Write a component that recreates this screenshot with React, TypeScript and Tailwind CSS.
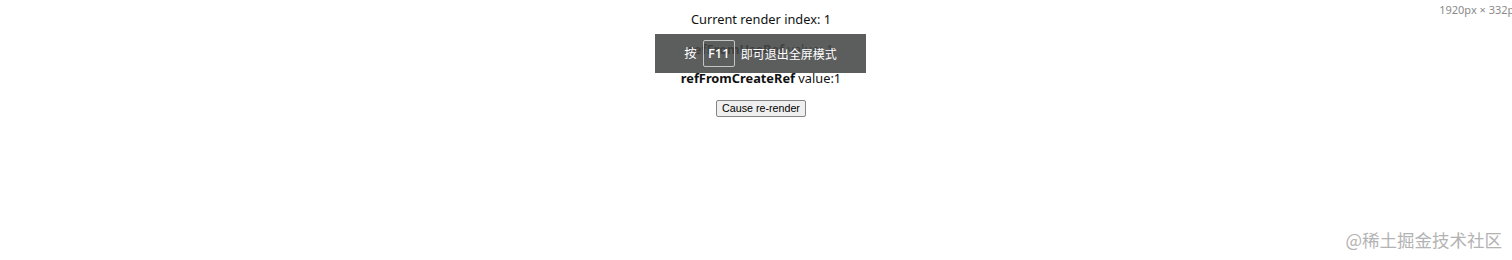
import React from "react";

export default function App() {
  return (
    <div className="relative w-[1512px] h-[260px] bg-white overflow-hidden" style={{ fontFamily: '"Noto Sans", "Open Sans", sans-serif' }}>
      <div className="flex flex-col items-center pl-[10px] pt-[5px] text-[12.8px] text-[#111]">
        <div className="h-[29.5px] leading-[29.5px]">Current render index: 1</div>
        <div className="h-[29.5px] leading-[29.5px]">
          <span className="font-bold">refFromUseRef</span> value: 1
        </div>
        <div className="h-[29.5px] leading-[29.5px]">
          <span className="font-bold">refFromCreateRef</span> value:1
        </div>
        <button className="mt-[6px] h-[17px] px-[5px] bg-[#efefef] border border-[#858585] rounded-[2px] text-[10.7px] leading-[15px] text-black" style={{ fontFamily: '"Liberation Sans", Arial, sans-serif' }}>
          Cause re-render
        </button>
      </div>

      <div className="absolute left-[655px] top-[34px] w-[211px] h-[39px] bg-[rgba(70,71,71,0.88)] flex items-center justify-center gap-[6px] text-white text-[12px]" style={{ fontFamily: '"Noto Sans CJK SC", "Noto Sans", sans-serif' }}>
        <span className="text-[12.5px]">按</span>
        <span className="h-[27px] px-[4px] flex items-center border border-[#c4c4c4] rounded-[2px] text-[13px] font-medium" style={{ fontFamily: '"Noto Sans", sans-serif' }}>F11</span>
        <span>即可退出全屏模式</span>
      </div>

      <div className="absolute right-0 top-[2px] text-[11px] text-[#8a8a8a] whitespace-nowrap translate-x-[8px]" style={{ fontFamily: '"Noto Sans", sans-serif' }}>
        1920px × 332px
      </div>

      <div className="absolute right-[10px] top-[227px] text-[17.5px] text-[#b3b3b3] whitespace-nowrap" style={{ fontFamily: '"Noto Sans CJK SC", "Noto Sans", sans-serif' }}>
        @稀土掘金技术社区
      </div>
    </div>
  );
}
